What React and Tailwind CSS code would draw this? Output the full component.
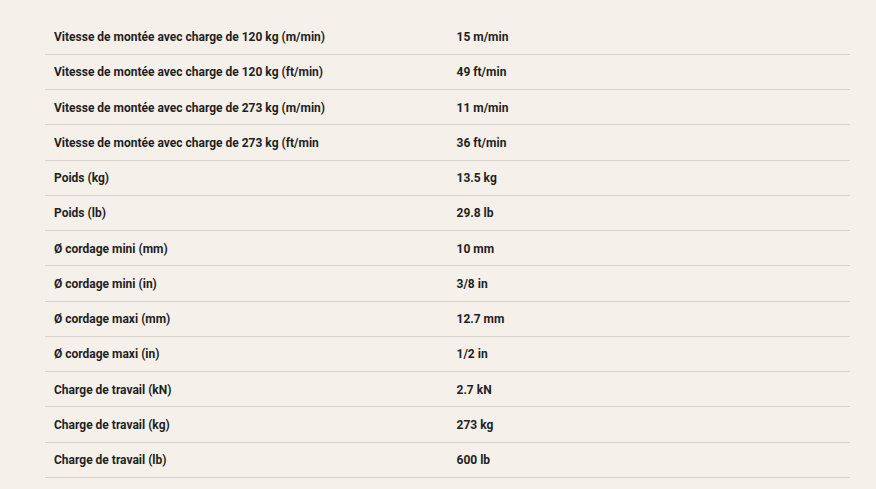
import React from "react";

const rows = [
  ["Vitesse de montée avec charge de 120 kg (m/min)", "15 m/min"],
  ["Vitesse de montée avec charge de 120 kg (ft/min)", "49 ft/min"],
  ["Vitesse de montée avec charge de 273 kg (m/min)", "11 m/min"],
  ["Vitesse de montée avec charge de 273 kg (ft/min", "36 ft/min"],
  ["Poids (kg)", "13.5 kg"],
  ["Poids (lb)", "29.8 lb"],
  ["Ø cordage mini (mm)", "10 mm"],
  ["Ø cordage mini (in)", "3/8 in"],
  ["Ø cordage maxi (mm)", "12.7 mm"],
  ["Ø cordage maxi (in)", "1/2 in"],
  ["Charge de travail (kN)", "2.7 kN"],
  ["Charge de travail (kg)", "273 kg"],
  ["Charge de travail (lb)", "600 lb"],
];

export default function App() {
  return (
    <div className="min-h-screen bg-[#f5f0ea] pt-[19px] pl-[45px] pr-[26px] font-['Roboto',sans-serif]">
      <table className="w-[805px] border-collapse text-[12px] font-bold text-[#1f1f1f]">
        <tbody>
          {rows.map(([label, value]) => (
            <tr key={label} className="h-[35.25px] border-b border-[#d6d1cc]">
              <td className="w-1/2 pl-[9px] pt-[1px]">{label}</td>
              <td className="w-1/2 pl-[9px] pt-[1px]">{value}</td>
            </tr>
          ))}
        </tbody>
      </table>
    </div>
  );
}
